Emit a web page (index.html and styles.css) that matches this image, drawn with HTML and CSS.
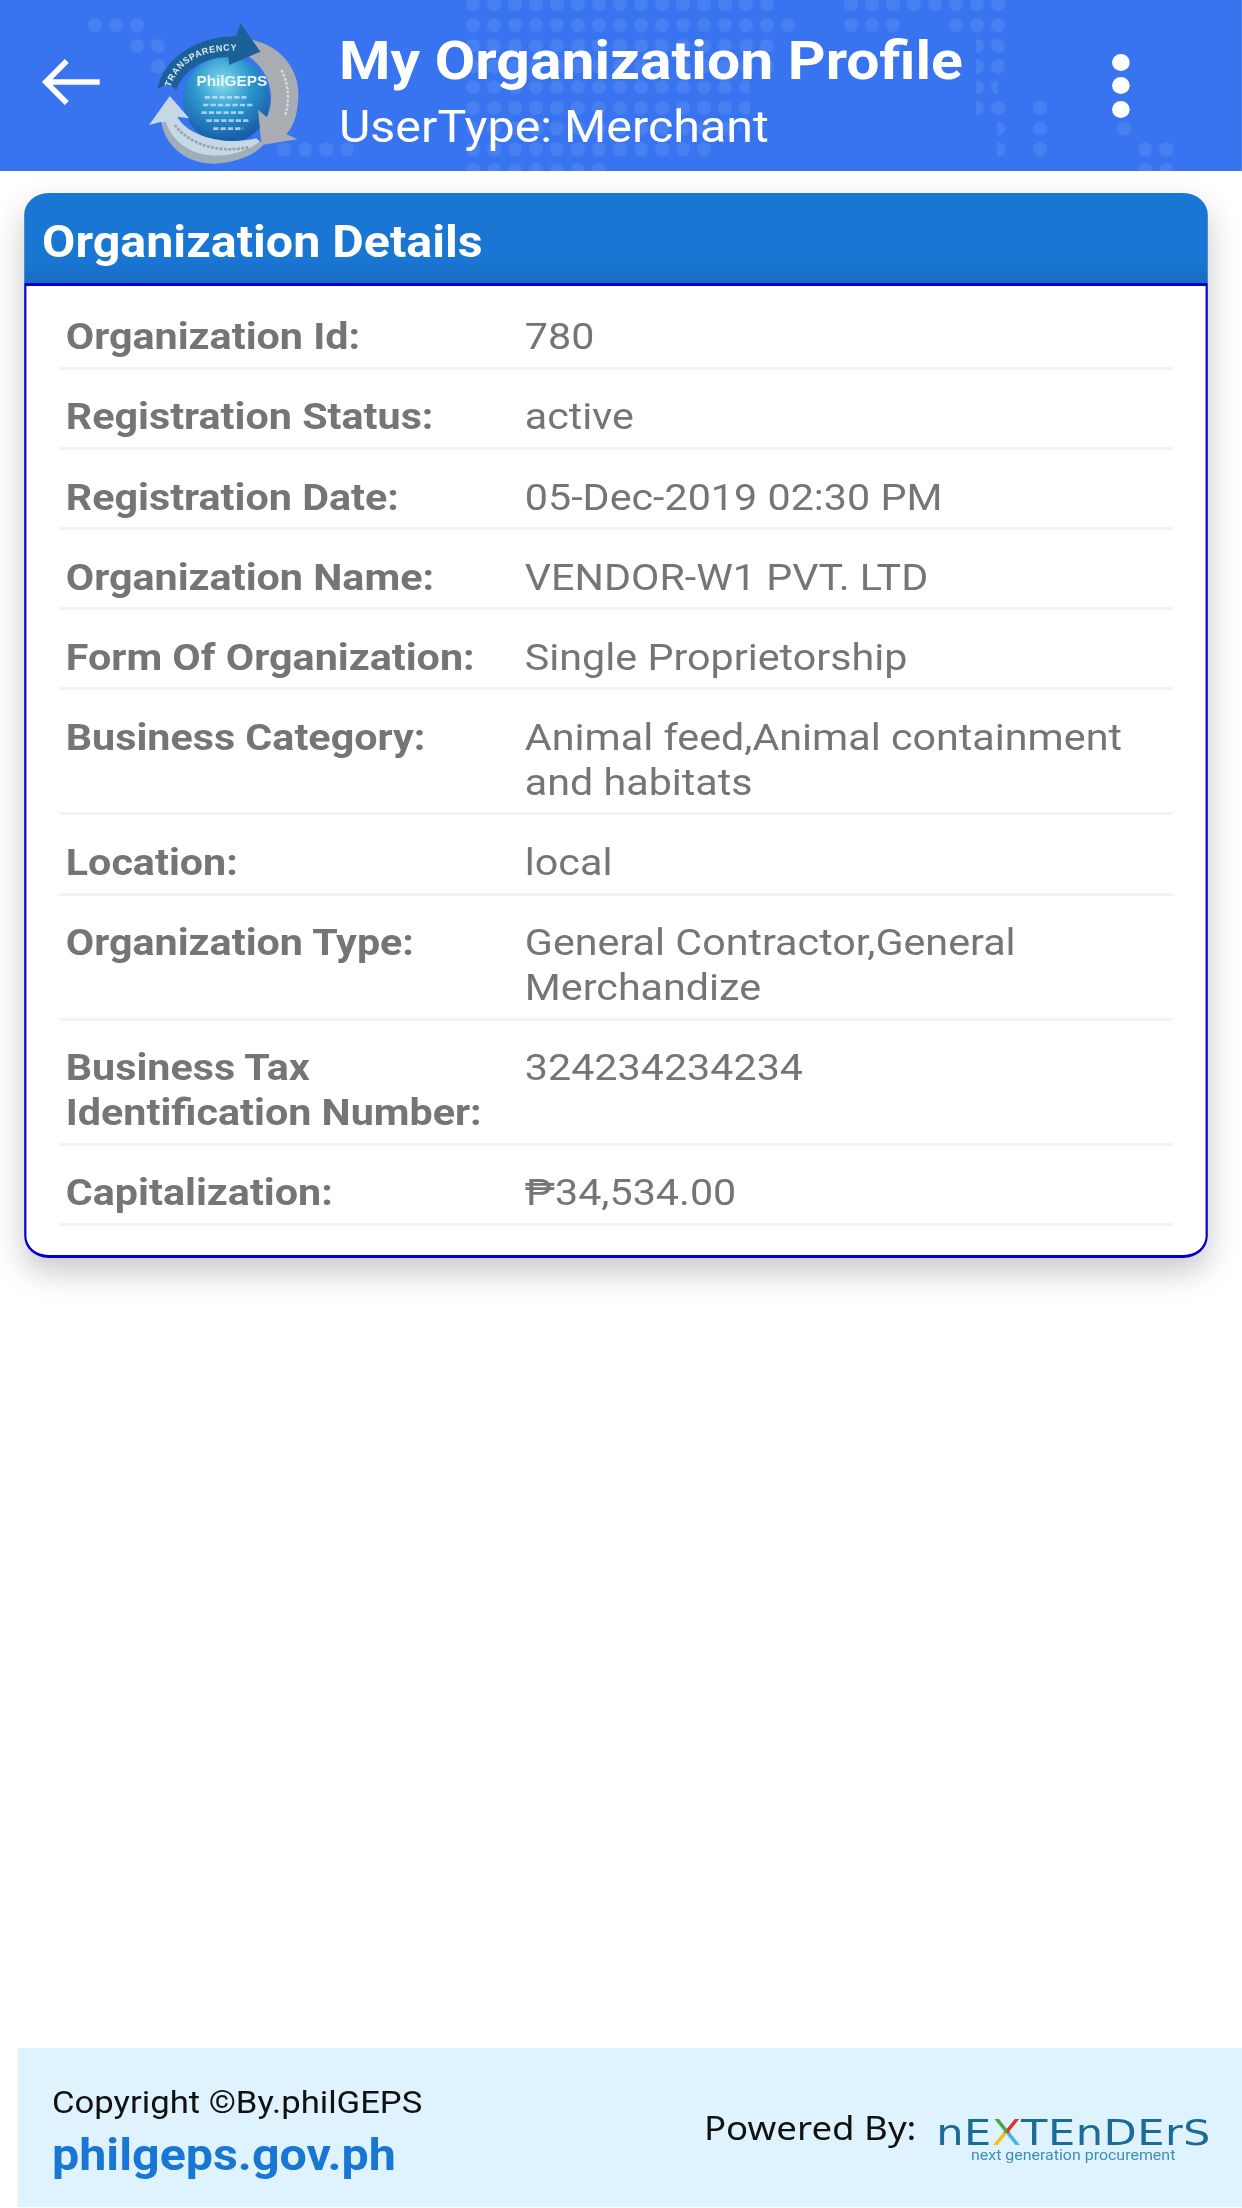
FILE: index.html
```html
<!DOCTYPE html>
<html lang="en">
<head>
<meta charset="utf-8">
<title>My Organization Profile</title>
<link rel="stylesheet" href="styles.css">
</head>
<body>
<div class="page">
  <header class="appbar">
    <svg class="dots" viewBox="0 0 1242 171" preserveAspectRatio="none" aria-hidden="true">
      <defs>
        <pattern id="dotgrid" x="84.5" y="-5.95" width="21" height="20.7" patternUnits="userSpaceOnUse">
          <circle cx="10.5" cy="10.35" r="7" fill="#fff" fill-opacity=".085"/>
        </pattern>
      </defs>
      <path fill="url(#dotgrid)" d="M462 0h318v14.7H462zM842 0h165v14.7H842zM84 14.7h64v20.7H84zM462 14.7h338v20.7H462zM842 14.7h64v20.7h-64zM948 14.7h59v20.7h-59zM126 35.4h44v20.7h-44zM462 35.4h318v20.7H462zM884 35.4h22v20.7h-22zM976 35.4h31v41.4h-31zM147 56.1h23v20.7h-23zM462 56.1h318v20.7H462zM462 76.8h288v41.4H462zM976 76.8h22v20.7h-22zM976 97.5h31v20.7h-31zM1032 97.5h21v62.1h-21zM462 118.2h279v20.7H462zM997 118.2h10v41.4h-10zM1116 118.2h20v20.7h-20zM273 138.9h84v20.7h-84zM462 138.9h252v20.7H462zM1137 138.9h42v20.7h-42zM462 159.6h150v11.4H462zM1137 159.6h42v11.4h-42z"/>
    </svg>
    <svg class="back" viewBox="0 0 60 48" preserveAspectRatio="none" aria-hidden="true">
      <path d="M58 24H4M25 3 4 24l21 21" fill="none" stroke="#fff" stroke-width="5.5"/>
    </svg>
    <svg class="logo" viewBox="0 0 540 480" preserveAspectRatio="none" aria-hidden="true">
      <defs>
        <radialGradient id="globe" cx=".45" cy=".3" r=".75">
          <stop offset="0" stop-color="#86dcec"/>
          <stop offset=".45" stop-color="#2b97cf"/>
          <stop offset="1" stop-color="#174f9e"/>
        </radialGradient>
        <filter id="soft" x="-5%" y="-5%" width="110%" height="110%"><feGaussianBlur stdDeviation="2"/></filter>
        <path id="arcTop" d="M122 232C145 160 215 118 320 122"/>
      </defs>
      <g filter="url(#soft)">
        <circle cx="290" cy="270" r="130" fill="url(#globe)"/>
        <g fill="none" stroke="#cfe6f6" stroke-width="8" stroke-dasharray="16 6" opacity=".75">
          <path d="M225 262h125M220 285h150M215 308h130M230 332h130M250 356h90"/>
        </g>
        <path fill="#a9acb0" d="M355 88C450 100 515 180 505 270C502 320 490 350 470 372L502 388L395 405L385 300L412 322C440 260 420 170 340 130L385 125Z"/>
        <path fill="#c6d7e6" d="M120 258L178 325L143 320C170 375 280 410 380 385L400 405C370 440 300 462 240 460C160 455 105 400 95 335L58 345Z"/>
        <path fill="#8a9298" opacity=".6" d="M96 338C105 400 160 455 240 460C300 462 370 440 400 405L388 396C350 425 300 440 245 436C175 430 125 390 108 335Z"/>
        <path fill="#1c6199" d="M82 238C100 150 190 80 320 78L332 40L392 125L298 165L296 142C230 140 165 175 140 240L115 220Z"/>
        <text class="logo-arc"><textPath href="#arcTop">TRANSPARENCY</textPath></text>
        <text class="logo-name" x="200" y="228">PhilGEPS</text>
        <g fill="none" stroke="#e4e8ec" stroke-width="7" stroke-dasharray="8 5" opacity=".8">
          <path d="M455 180C478 225 480 275 465 320"/>
        </g>
        <g fill="none" stroke="#8d979e" stroke-width="8" stroke-dasharray="9 4" opacity=".8">
          <path d="M135 345C180 405 270 430 355 412"/>
        </g>
      </g>
    </svg>
    <div class="titles">
      <div class="title">My Organization Profile</div>
      <div class="subtitle">UserType: Merchant</div>
    </div>
    <div class="kebab" aria-hidden="true"><i></i><i></i><i></i></div>
  </header>

  <main class="content">
    <section class="card">
      <h2 class="card-head">Organization Details</h2>
      <div class="card-body">
        <div class="row"><div class="label">Organization Id:</div><div class="value">780</div></div>
        <div class="row"><div class="label">Registration Status:</div><div class="value">active</div></div>
        <div class="row"><div class="label">Registration Date:</div><div class="value">05-Dec-2019 02:30 PM</div></div>
        <div class="row"><div class="label">Organization Name:</div><div class="value">VENDOR-W1 PVT. LTD</div></div>
        <div class="row"><div class="label">Form Of Organization:</div><div class="value">Single Proprietorship</div></div>
        <div class="row"><div class="label">Business Category:</div><div class="value">Animal feed,Animal containment and habitats</div></div>
        <div class="row"><div class="label">Location:</div><div class="value">local</div></div>
        <div class="row"><div class="label">Organization Type:</div><div class="value">General Contractor,General Merchandize</div></div>
        <div class="row"><div class="label">Business Tax Identification Number:</div><div class="value">324234234234</div></div>
        <div class="row"><div class="label">Capitalization:</div><div class="value">₱34,534.00</div></div>
      </div>
    </section>
  </main>

  <footer class="footer">
    <div class="foot-left">
      <div class="copy">Copyright ©By.philGEPS</div>
      <div class="site">philgeps.gov.ph</div>
    </div>
    <div class="foot-right">
      <div class="powered">Powered By:</div>
      <div class="brand">
        <div class="wordmark">nE<span class="x">X</span>TEnDErS</div>
        <div class="tagline">next generation procurement</div>
      </div>
    </div>
  </footer>
</div>
</body>
</html>
```
FILE: styles.css
```css
* { box-sizing: border-box; }
html, body { margin: 0; padding: 0; background: #fff; overflow: hidden; }

/* The source capture is stretched about 10% horizontally, so the whole page is. */
.page {
  width: 1129.1px;
  height: 2208px;
  display: flex;
  flex-direction: column;
  font-family: Roboto, "Liberation Sans", sans-serif;
  transform: scaleX(1.1);
  transform-origin: 0 0;
}
.appbar {
  position: relative;
  height: 171px;
  flex: none;
  background: #3874f0;
  display: flex;
  align-items: center;
  overflow: hidden;
}
.dots { position: absolute; left: 0; top: 0; width: 100%; height: 171px; }
.back { position: relative; flex: none; width: 54.5px; height: 48px; margin-left: 38.2px; margin-top: -8px; }
.logo { position: relative; flex: none; width: 163.6px; height: 160px; margin-left: 25.5px; margin-top: 9px; }
.logo-arc { font: 700 27px "Liberation Sans", sans-serif; fill: #dbe7f0; letter-spacing: 2px; }
.logo-name { font: 700 46px "Liberation Sans", sans-serif; fill: #e8f4fb; }
.titles { position: relative; margin-left: 26.4px; padding-top: 10px; color: #fff; flex: 1; }
.title { font-size: 53.5px; font-weight: 700; line-height: 62px; }
.subtitle { font-size: 44px; line-height: 50px; margin-top: 10px; }
.kebab {
  position: relative;
  display: flex;
  flex-direction: column;
  gap: 6.5px;
  margin-right: 101.9px;
}
.kebab i { display: block; width: 16.4px; height: 17px; border-radius: 50%; background: #fff; }

.content { flex: 1; padding: 21.5px 30.9px 0 21.8px; }
.card { box-shadow: 0 14px 30px rgba(0, 0, 0, .22); border-radius: 22px; }
.card-head {
  margin: 0;
  height: 90px;
  padding: 8px 16.4px 0;
  display: flex;
  align-items: center;
  background: linear-gradient(#1976d2 75%, #176cc4);
  color: #fff;
  font-size: 44px;
  font-weight: 700;
  border-radius: 22px 22px 0 0;
}
.card-body {
  background: #fff;
  border: 3px solid #0000cd;
  border-left-width: 2.8px;
  border-right-width: 2.8px;
  border-radius: 0 0 22px 22px;
  padding: 4px 30px 29.5px;
}
.row {
  display: flex;
  padding: 24.8px 6px 7.6px;
  border-bottom: 3px solid #f3f3f3;
  font-size: 37.5px;
  line-height: 44.8px;
  color: #757575;
}
.label { flex: none; width: 417.3px; font-weight: 700; padding-right: 30px; }
.value { flex: 1; }

.footer {
  flex: none;
  height: 159px;
  margin: 0 0 1px 15.5px;
  background: #dff3fe;
  display: flex;
  justify-content: space-between;
  align-items: center;
  padding: 10px 27.5px 0 31.8px;
}
.copy { font-size: 31.5px; line-height: 40px; color: #111; }
.site { font-size: 44px; line-height: 56px; font-weight: 700; color: #1976d2; margin-top: 4px; }
.foot-right { display: flex; align-items: center; gap: 16.5px; margin-bottom: 8px; }
.powered { font-size: 33.3px; color: #111; font-family: "Noto Sans", sans-serif; margin-bottom: 4px; }
.brand { width: 252px; text-align: center; margin-top: 24px; }
.wordmark {
  font-family: "DejaVu Sans", sans-serif;
  font-size: 35px;
  line-height: 30px;
  letter-spacing: .4px;
  color: #1c6a98;
  white-space: nowrap;
  transform: scaleX(1.12);
}
.x {
  background: conic-gradient(#d8372f 0 25%, #46b5e8 25% 50%, #f0c020 50% 75%, #4da83c 75% 100%);
  -webkit-background-clip: text;
  background-clip: text;
  color: transparent;
}
.tagline { font-size: 14.5px; line-height: 16px; color: #3e8db8; white-space: nowrap; }
```
